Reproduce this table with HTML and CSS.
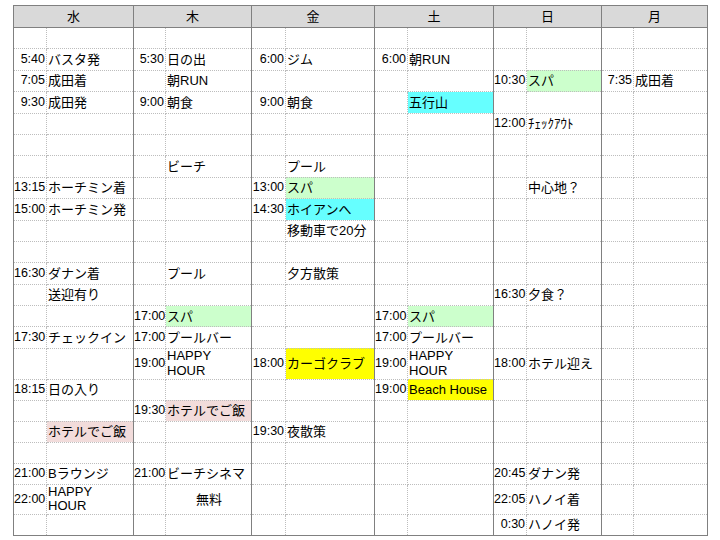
FILE: index.html
```html
<!DOCTYPE html>
<html lang="ja">
<head>
<meta charset="utf-8">
<title>旅程</title>
<link rel="stylesheet" href="styles.css">
</head>
<body>
<table class="sheet">
<colgroup>
<col class="c33"><col class="c87"><col class="c32"><col class="c86"><col class="c34"><col class="c89"><col class="c33"><col class="c86"><col class="c33"><col class="c75"><col class="c32"><col class="c74">
</colgroup>
<thead>
<tr class="hd"><th colspan="2">水</th><th colspan="2">木</th><th colspan="2">金</th><th colspan="2">土</th><th colspan="2">日</th><th colspan="2">月</th></tr>
</thead>
<tbody>
<tr class="r"><td class="t"></td><td class="e"></td><td class="t"></td><td class="e"></td><td class="t"></td><td class="e"></td><td class="t"></td><td class="e"></td><td class="t"></td><td class="e"></td><td class="t"></td><td class="e"></td></tr>
<tr class="r"><td class="t">5:40</td><td class="e">バスタ発</td><td class="t">5:30</td><td class="e">日の出</td><td class="t">6:00</td><td class="e">ジム</td><td class="t">6:00</td><td class="e">朝RUN</td><td class="t"></td><td class="e"></td><td class="t"></td><td class="e"></td></tr>
<tr class="r"><td class="t">7:05</td><td class="e">成田着</td><td class="t"></td><td class="e">朝RUN</td><td class="t"></td><td class="e"></td><td class="t"></td><td class="e"></td><td class="t">10:30</td><td class="e g">スパ</td><td class="t">7:35</td><td class="e">成田着</td></tr>
<tr class="r"><td class="t">9:30</td><td class="e">成田発</td><td class="t">9:00</td><td class="e">朝食</td><td class="t">9:00</td><td class="e">朝食</td><td class="t"></td><td class="e c">五行山</td><td class="t"></td><td class="e"></td><td class="t"></td><td class="e"></td></tr>
<tr class="r"><td class="t"></td><td class="e"></td><td class="t"></td><td class="e"></td><td class="t"></td><td class="e"></td><td class="t"></td><td class="e"></td><td class="t">12:00</td><td class="e">ﾁｪｯｸｱｳﾄ</td><td class="t"></td><td class="e"></td></tr>
<tr class="r"><td class="t"></td><td class="e"></td><td class="t"></td><td class="e"></td><td class="t"></td><td class="e"></td><td class="t"></td><td class="e"></td><td class="t"></td><td class="e"></td><td class="t"></td><td class="e"></td></tr>
<tr class="r"><td class="t"></td><td class="e"></td><td class="t"></td><td class="e">ビーチ</td><td class="t"></td><td class="e">プール</td><td class="t"></td><td class="e"></td><td class="t"></td><td class="e"></td><td class="t"></td><td class="e"></td></tr>
<tr class="r"><td class="t">13:15</td><td class="e">ホーチミン着</td><td class="t"></td><td class="e"></td><td class="t">13:00</td><td class="e g">スパ</td><td class="t"></td><td class="e"></td><td class="t"></td><td class="e">中心地？</td><td class="t"></td><td class="e"></td></tr>
<tr class="r"><td class="t">15:00</td><td class="e">ホーチミン発</td><td class="t"></td><td class="e"></td><td class="t">14:30</td><td class="e c">ホイアンへ</td><td class="t"></td><td class="e"></td><td class="t"></td><td class="e"></td><td class="t"></td><td class="e"></td></tr>
<tr class="r"><td class="t"></td><td class="e"></td><td class="t"></td><td class="e"></td><td class="t"></td><td class="e">移動車で20分</td><td class="t"></td><td class="e"></td><td class="t"></td><td class="e"></td><td class="t"></td><td class="e"></td></tr>
<tr class="r"><td class="t"></td><td class="e"></td><td class="t"></td><td class="e"></td><td class="t"></td><td class="e"></td><td class="t"></td><td class="e"></td><td class="t"></td><td class="e"></td><td class="t"></td><td class="e"></td></tr>
<tr class="r"><td class="t">16:30</td><td class="e">ダナン着</td><td class="t"></td><td class="e">プール</td><td class="t"></td><td class="e">夕方散策</td><td class="t"></td><td class="e"></td><td class="t"></td><td class="e"></td><td class="t"></td><td class="e"></td></tr>
<tr class="r"><td class="t"></td><td class="e">送迎有り</td><td class="t"></td><td class="e"></td><td class="t"></td><td class="e"></td><td class="t"></td><td class="e"></td><td class="t">16:30</td><td class="e">夕食？</td><td class="t"></td><td class="e"></td></tr>
<tr class="r"><td class="t"></td><td class="e"></td><td class="t">17:00</td><td class="e g">スパ</td><td class="t"></td><td class="e"></td><td class="t">17:00</td><td class="e g">スパ</td><td class="t"></td><td class="e"></td><td class="t"></td><td class="e"></td></tr>
<tr class="r"><td class="t">17:30</td><td class="e">チェックイン</td><td class="t">17:00</td><td class="e">プールバー</td><td class="t"></td><td class="e"></td><td class="t">17:00</td><td class="e">プールバー</td><td class="t"></td><td class="e"></td><td class="t"></td><td class="e"></td></tr>
<tr class="tall"><td class="t"></td><td class="e"></td><td class="t">19:00</td><td class="e"><span class="two">HAPPY<br>HOUR</span></td><td class="t">18:00</td><td class="e y">カーゴクラブ</td><td class="t">19:00</td><td class="e"><span class="two">HAPPY<br>HOUR</span></td><td class="t">18:00</td><td class="e">ホテル迎え</td><td class="t"></td><td class="e"></td></tr>
<tr class="r2"><td class="t">18:15</td><td class="e">日の入り</td><td class="t"></td><td class="e"></td><td class="t"></td><td class="e"></td><td class="t">19:00</td><td class="e y">Beach House</td><td class="t"></td><td class="e"></td><td class="t"></td><td class="e"></td></tr>
<tr class="r2"><td class="t"></td><td class="e"></td><td class="t">19:30</td><td class="e p">ホテルでご飯</td><td class="t"></td><td class="e"></td><td class="t"></td><td class="e"></td><td class="t"></td><td class="e"></td><td class="t"></td><td class="e"></td></tr>
<tr class="r2"><td class="t"></td><td class="e p">ホテルでご飯</td><td class="t"></td><td class="e"></td><td class="t">19:30</td><td class="e">夜散策</td><td class="t"></td><td class="e"></td><td class="t"></td><td class="e"></td><td class="t"></td><td class="e"></td></tr>
<tr class="r2"><td class="t"></td><td class="e"></td><td class="t"></td><td class="e"></td><td class="t"></td><td class="e"></td><td class="t"></td><td class="e"></td><td class="t"></td><td class="e"></td><td class="t"></td><td class="e"></td></tr>
<tr class="r2"><td class="t">21:00</td><td class="e">Bラウンジ</td><td class="t">21:00</td><td class="e">ビーチシネマ</td><td class="t"></td><td class="e"></td><td class="t"></td><td class="e"></td><td class="t">20:45</td><td class="e">ダナン発</td><td class="t"></td><td class="e"></td></tr>
<tr class="tall2"><td class="t">22:00</td><td class="e"><span class="two">HAPPY<br>HOUR</span></td><td class="t"></td><td class="e ctr">無料</td><td class="t"></td><td class="e"></td><td class="t"></td><td class="e"></td><td class="t">22:05</td><td class="e">ハノイ着</td><td class="t"></td><td class="e"></td></tr>
<tr class="r3"><td class="t"></td><td class="e"></td><td class="t"></td><td class="e"></td><td class="t"></td><td class="e"></td><td class="t"></td><td class="e"></td><td class="t">0:30</td><td class="e">ハノイ発</td><td class="t"></td><td class="e"></td></tr>
</tbody>
</table>
</body>
</html>
```

FILE: styles.css
```css
html, body {
  background: #ffffff;
}
body {
  margin: 0;
  padding: 5px 0 0 13px;
  font-family: "Liberation Sans", "Noto Sans CJK JP", sans-serif;
  font-size: 13px;
  color: #000000;
}
.sheet {
  border-collapse: collapse;
  table-layout: fixed;
  width: 694px;
}
.c33 { width: 33px; }
.c32 { width: 32px; }
.c34 { width: 34px; }
.c87 { width: 87px; }
.c86 { width: 86px; }
.c89 { width: 89px; }
.c75 { width: 75px; }
.c74 { width: 74px; }

.hd { height: 22px; }
.sheet th {
  background: #d9d9d9;
  font-weight: normal;
  font-size: 13px;
  border: 1px solid #808080;
  text-align: center;
  padding: 0;
  line-height: 15px;
}
.sheet td {
  padding: 0 0 0 1px;
  border-bottom: 1px dotted #bdbdbd;
  white-space: nowrap;
  overflow: visible;
  line-height: 15px;
  vertical-align: middle;
}
.sheet td.t {
  text-align: right;
  padding: 0 1px 0 0;
  border-right: 1px dotted #bdbdbd;
  font-size: 12.5px;
}
.sheet td.e {
  border-right: 1px solid #808080;
}
.sheet td:first-child {
  border-left: 1px solid #808080;
}
.sheet tbody tr:last-child td {
  border-bottom: 1px solid #808080;
}
.r { height: 21.4px; }
.r2 { height: 21px; }
.r3 { height: 21px; }
.tall { height: 31px; }
.tall2 { height: 30px; }

.two {
  display: block;
  line-height: 14.5px;
}
.ctr { text-align: center; }
.g { background: #ccffcc; }
.c { background: #66ffff; }
.p { background: #f2dcdb; }
.y { background: #ffff00; }
```
